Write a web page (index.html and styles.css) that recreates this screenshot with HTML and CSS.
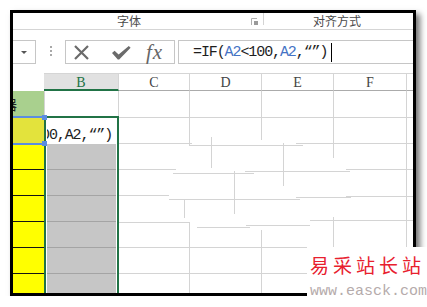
FILE: index.html
```html
<!DOCTYPE html>
<html lang="zh-CN">
<head>
    <meta charset="UTF-8">
    <meta name="viewport" content="width=device-width, initial-scale=1.0">
    <title>IF 公式</title>
    <link rel="stylesheet" href="styles.css">
</head>
<body>
<div class="shot">
    <!-- ribbon group captions -->
    <div class="ribbon-groups">
        <div class="group group-font">
            <span class="group-label">字体</span>
            <svg class="launcher" width="8" height="8" viewBox="0 0 8 8">
                <path d="M0.5 0.5H6M0.5 0.5V7" stroke="#b0b0b0" fill="none"/>
                <rect x="3" y="3" width="4" height="4" fill="#9a9a9a"/>
            </svg>
        </div>
        <span class="sep"></span>
        <div class="group group-align">
            <span class="group-label">对齐方式</span>
        </div>
    </div>

    <!-- formula bar -->
    <div class="formula-bar">
        <div class="name-box"><span class="arrow"></span></div>
        <div class="grip"><i></i><i></i><i></i></div>
        <div class="fx-buttons">
            <svg class="icon-cancel" width="15" height="15" viewBox="0 0 15 15">
                <path d="M1 1L14 14M14 1L1 14" stroke="#6b6b6b" stroke-width="2.2"/>
            </svg>
            <svg class="icon-enter" width="19" height="14" viewBox="0 0 19 14">
                <polygon points="0,7 2.6,4.8 6.6,8.6 16.8,0 18.6,1.8 7.2,13.6 5.8,13.6" fill="#6b6b6b"/>
            </svg>
            <span class="fx">fx</span>
        </div>
        <div class="formula-input">
            <span class="formula">=IF(<span class="ref">A2</span>&lt;100,<span class="ref">A2</span>,“”)</span><span class="caret"></span>
        </div>
    </div>

    <!-- column headers -->
    <div class="col-headers">
        <div class="col-head head-a"></div>
        <div class="col-head head-b">B</div>
        <div class="col-head w71">C</div>
        <div class="col-head w72">D</div>
        <div class="col-head w72">E</div>
        <div class="col-head w73">F</div>
        <div class="col-head head-g"></div>
    </div>

    <!-- cells -->
    <div class="sheet">
        <div class="col-a">
            <div class="cell a1"><span>器</span></div>
            <div class="cell a2">
                <i class="handle handle-top"></i>
                <i class="handle handle-bottom"></i>
            </div>
            <div class="cell a-yellow first"></div>
            <div class="cell a-yellow"></div>
            <div class="cell a-yellow"></div>
            <div class="cell a-yellow"></div>
            <div class="cell a-yellow"></div>
            <div class="cell a-yellow"></div>
        </div>
        <div class="col-b">
            <div class="cell b1"></div>
            <div class="selection">
                <div class="cell b2"><span>00,A2,“”)</span></div>
                <div class="cell b-gray"></div>
                <div class="cell b-gray"></div>
                <div class="cell b-gray"></div>
                <div class="cell b-gray"></div>
                <div class="cell b-gray"></div>
                <div class="cell b-gray"></div>
            </div>
        </div>
        <svg class="grid-rest" width="294" height="202" viewBox="0 0 294 202">
            <g stroke="#d4d4d4" stroke-width="1" shape-rendering="crispEdges">
                <line x1="70.5" y1="0" x2="70.5" y2="54"/>
                <line x1="142.5" y1="0" x2="142.5" y2="49"/>
                <line x1="214.5" y1="0" x2="214.5" y2="67"/>
                <line x1="287.5" y1="0" x2="287.5" y2="202"/>
                <line x1="0" y1="26.5" x2="294" y2="26.5"/>
                <line x1="0" y1="52.5" x2="73" y2="52.5"/>
                <line x1="70" y1="54.5" x2="184" y2="54.5"/>
                <line x1="177" y1="52.5" x2="294" y2="52.5"/>
                <line x1="92.5" y1="46" x2="92.5" y2="77"/>
                <line x1="164.5" y1="52" x2="164.5" y2="95"/>
                <line x1="0" y1="78.5" x2="57" y2="78.5"/>
                <line x1="54" y1="82.5" x2="135" y2="82.5"/>
                <line x1="126" y1="80.5" x2="231" y2="80.5"/>
                <line x1="227" y1="78.5" x2="294" y2="78.5"/>
                <line x1="115.5" y1="80" x2="115.5" y2="123"/>
                <line x1="0" y1="104.5" x2="50" y2="104.5"/>
                <line x1="50" y1="108.5" x2="181" y2="108.5"/>
                <line x1="177" y1="106.5" x2="232" y2="106.5"/>
                <line x1="227" y1="105.5" x2="294" y2="105.5"/>
                <line x1="65.5" y1="108" x2="65.5" y2="127"/>
                <line x1="0" y1="131.5" x2="70" y2="131.5"/>
                <line x1="70.5" y1="131" x2="70.5" y2="202"/>
                <line x1="78" y1="136.5" x2="131" y2="136.5"/>
                <line x1="127" y1="134.5" x2="191" y2="134.5"/>
                <line x1="191" y1="129.5" x2="294" y2="129.5"/>
                <line x1="142.5" y1="139" x2="142.5" y2="202"/>
                <line x1="214.5" y1="126" x2="214.5" y2="156"/>
                <line x1="0" y1="156.5" x2="294" y2="156.5"/>
                <line x1="0" y1="182.5" x2="294" y2="182.5"/>
            </g>
        </svg>
    </div>
</div>

<div class="watermark">
    <div class="wm-cn">易采站长站</div>
    <div class="wm-url">www.easck.com</div>
</div>
</body>
</html>
```

FILE: styles.css
```css
body {
    margin: 0;
    background-color: #fff;
    font-family: "Liberation Sans", Arial, sans-serif;
    overflow: hidden;
}
.shot {
    margin: 10px 0 0 10px;
    width: 400px;
    height: 280px;
    border: 3px solid #000;
    background-color: #fff;
    box-shadow: 4px 4px 6px rgba(0, 0, 0, 0.55);
    overflow: hidden;
}

/* ribbon captions */
.ribbon-groups {
    display: flex;
    height: 16px;
    border-bottom: 1px solid #d5d5d5;
}
.group {
    display: flex;
    align-items: center;
}
.group-font {
    width: 250px;
}
.group-font .group-label {
    flex: 1;
    text-align: center;
    padding-right: 6px;
}
.group-align {
    flex: 1;
    justify-content: center;
    padding-right: 3px;
}
.group-label {
    font-family: "Noto Sans CJK SC", sans-serif;
    font-size: 12px;
    line-height: 16px;
    color: #4a4a4a;
}
.launcher {
    align-self: flex-end;
    margin: 0 4px 3px 0;
}
.sep {
    width: 1px;
    height: 12px;
    background-color: #d4d4d4;
}

/* formula bar */
.formula-bar {
    display: flex;
    align-items: flex-start;
    height: 43px;
    padding-top: 10px;
    box-sizing: border-box;
}
.name-box {
    width: 23px;
    height: 24px;
    box-sizing: border-box;
    border: 1px solid #c6c6c6;
    border-left: none;
    display: flex;
    align-items: center;
    justify-content: center;
}
.arrow {
    width: 0;
    height: 0;
    border-left: 3px solid transparent;
    border-right: 3px solid transparent;
    border-top: 3px solid #555;
    margin-right: 1px;
}
.grip {
    display: flex;
    flex-direction: column;
    gap: 2px;
    margin: 6px 0 0 14px;
}
.grip i {
    width: 2px;
    height: 2px;
    background-color: #a8a8a8;
}
.fx-buttons {
    width: 110px;
    height: 24px;
    box-sizing: border-box;
    border: 1px solid #c6c6c6;
    margin-left: 13px;
    display: flex;
    align-items: center;
}
.icon-cancel {
    margin-left: 8px;
}
.icon-enter {
    margin: 2px 0 0 23px;
}
.fx {
    margin-left: 15px;
    font-family: "Liberation Serif", serif;
    font-style: italic;
    font-size: 21px;
    line-height: 22px;
    color: #666;
    letter-spacing: 1px;
}
.formula-input {
    flex: 1;
    height: 24px;
    box-sizing: border-box;
    margin-left: 3px;
    border: 1px solid #c6c6c6;
    border-right: none;
    padding-left: 14px;
    display: flex;
    align-items: center;
}
.formula,
.b2 span {
    font-family: "Liberation Mono", monospace;
    font-size: 15px;
    letter-spacing: -1.1px;
    color: #1e1e1e;
    white-space: nowrap;
}
.ref {
    color: #4472c4;
}
.caret {
    width: 1px;
    height: 19px;
    margin-left: 4px;
    background-color: #000;
}

/* column headers */
.col-headers {
    display: flex;
    height: 18px;
}
.col-head {
    box-sizing: border-box;
    height: 18px;
    border-top: 1px solid #d5d5d5;
    border-right: 1px solid #d5d5d5;
    border-bottom: 1px solid #ababab;
    font-family: "Liberation Serif", serif;
    font-size: 14px;
    line-height: 17px;
    color: #444;
    text-align: center;
}
.head-a {
    width: 31px;
    border: none;
}
.head-b {
    width: 75px;
    background-color: #e1e1e1;
    border-bottom: 2px solid #217346;
    color: #217346;
}
.w71 { width: 71px; }
.w72 { width: 72px; }
.w73 { width: 73px; }
.head-g {
    width: 6px;
    border-right: none;
}

/* cells */
.sheet {
    display: flex;
    height: 202px;
    overflow: hidden;
}
.cell {
    box-sizing: border-box;
}
.col-a {
    width: 31px;
    flex: none;
}
.a1 {
    height: 25px;
    background-color: #a9d08e;
    overflow: hidden;
    font-family: "Noto Sans CJK SC", sans-serif;
    font-size: 14px;
    line-height: 27px;
    color: #222;
}
.a1 span {
    margin-left: -10px;
}
.a2 {
    position: relative;
    height: 29px;
    background-color: #e3e33c;
    border-top: 2px solid #5b8de0;
    border-bottom: 2px solid #5b8de0;
}
.handle {
    position: absolute;
    left: 29px;
    width: 5px;
    height: 5px;
    background-color: #5b8de0;
    z-index: 2;
}
.handle-top { top: -3px; }
.handle-bottom { top: 23px; }
.a-yellow {
    height: 26px;
    background-color: #ffff00;
    border-bottom: 1px solid #151515;
}
.a-yellow.first {
    height: 25px;
}
.col-b {
    width: 75px;
    flex: none;
}
.b1 {
    height: 25px;
    border-left: 1px solid #d4d4d4;
    border-right: 1px solid #d4d4d4;
}
.selection {
    border: 2px solid #217346;
    border-bottom: none;
    padding: 1px 1px 0;
    background-color: #fff;
}
.b2 {
    height: 25px;
    overflow: hidden;
    display: flex;
    align-items: flex-end;
    line-height: 16px;
}
.b2 span {
    margin-left: -6px;
}
.b-gray {
    height: 26px;
    background-color: #c6c6c6;
    border-bottom: 1px solid #a4a4a4;
}
.grid-rest {
    display: block;
    flex: none;
}

/* site watermark over the corner */
.watermark {
    position: absolute;
    left: 307px;
    top: 247px;
    width: 120px;
    height: 60px;
    background-color: #fff;
    z-index: 5;
    padding: 6px 0 0 3px;
    box-sizing: border-box;
}
.wm-cn {
    font-family: "Noto Sans CJK SC", sans-serif;
    font-size: 19px;
    line-height: 24px;
    letter-spacing: 4px;
    color: #e8202e;
}
.wm-url {
    font-family: "Liberation Mono", monospace;
    font-size: 15px;
    line-height: 20px;
    margin-top: 5px;
    color: #b5abab;
}
```
